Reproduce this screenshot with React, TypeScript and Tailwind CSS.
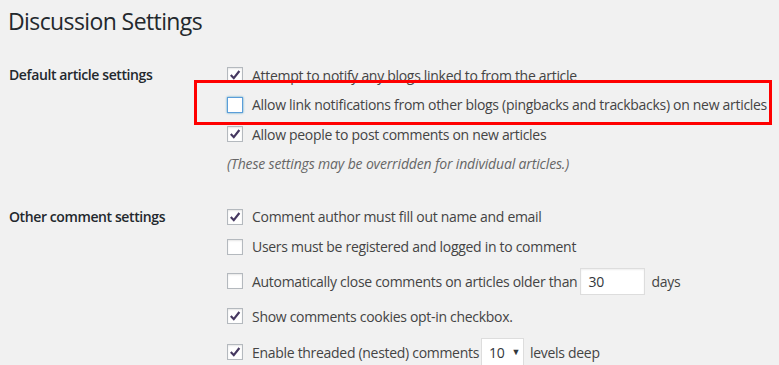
function Check({ checked, focused }: { checked?: boolean; focused?: boolean }) {
  return (
    <span
      className={
        "flex h-4 w-4 shrink-0 items-center justify-center border bg-white " +
        (focused
          ? "border-[#5b9dd9] shadow-[0_0_2px_rgba(30,140,190,0.8)]"
          : "border-[#b4b9be] shadow-[inset_0_1px_2px_rgba(0,0,0,0.1)]")
      }
    >
      {checked && (
        <svg viewBox="0 0 16 16" width={16} height={16} aria-hidden="true">
          <path d="M3.2 8 L6.6 11.6 L13 3.4" fill="none" stroke="#463861" strokeWidth={2.5} />
        </svg>
      )}
    </span>
  )
}

function Row({ h, checked, focused, children }: { h: string; checked?: boolean; focused?: boolean; children: React.ReactNode }) {
  return (
    <div className={"flex items-center gap-[9px] " + h}>
      <Check checked={checked} focused={focused} />
      <span className="flex items-center whitespace-nowrap">{children}</span>
    </div>
  )
}

export default function App() {
  return (
    <div className="relative h-[365px] w-[779px] overflow-hidden bg-[#f1f1f1] font-['Open_Sans',sans-serif] text-[14px] tracking-[-0.3px] text-[#444]">
      <h1 className="h-[60px] pl-[8px] pt-[6px] text-[23px] leading-[30px] font-normal tracking-[-0.6px] text-[#23282d]">
        Discussion Settings
      </h1>

      <section className="flex">
        <div className="w-[227px] shrink-0 pl-[9px] leading-[30px] font-semibold tracking-[-0.4px] text-[#23282d]">
          Default article settings
        </div>
        <div className="flex flex-col">
          <Row h="h-[30px]" checked>Attempt to notify any blogs linked to from the article</Row>
          <Row h="h-[29px]" focused>Allow link notifications from other blogs (pingbacks and trackbacks) on new articles</Row>
          <Row h="h-[30px]" checked>Allow people to post comments on new articles</Row>
          <p className="flex h-[28px] items-center italic tracking-[-0.15px] text-[#666]">
            (These settings may be overridden for individual articles.)
          </p>
        </div>
      </section>

      <section className="mt-[24px] flex">
        <div className="w-[227px] shrink-0 pl-[9px] leading-[31px] font-semibold tracking-[-0.4px] text-[#23282d]">
          Other comment settings
        </div>
        <div className="flex flex-col">
          <Row h="h-[31px]" checked>Comment author must fill out name and email</Row>
          <Row h="h-[29px]">Users must be registered and logged in to comment</Row>
          <Row h="h-[40px]">
            Automatically close comments on articles older than
            <span className="ml-[3px] mr-[6px] flex h-[27px] w-[65px] items-center border border-[#ddd] bg-white pl-[7px] text-[#32373c] shadow-[inset_0_1px_2px_rgba(0,0,0,0.07)]">
              30
            </span>
            days
          </Row>
          <Row h="h-[30px]" checked>Show comments cookies opt-in checkbox.</Row>
          <Row h="h-[42px]" checked>
            Enable threaded (nested) comments
            <span className="ml-[2px] mr-[6px] flex h-[28px] w-[43px] items-center gap-[7px] border border-[#ddd] bg-white pl-[7px] text-[#32373c]">
              10
              <span className="text-[9px]">▼</span>
            </span>
            levels deep
          </Row>
        </div>
      </section>

      <div className="pointer-events-none absolute left-[194px] top-[80px] h-[45px] w-[578px] border-[3px] border-[#ff0000]" />
    </div>
  )
}
